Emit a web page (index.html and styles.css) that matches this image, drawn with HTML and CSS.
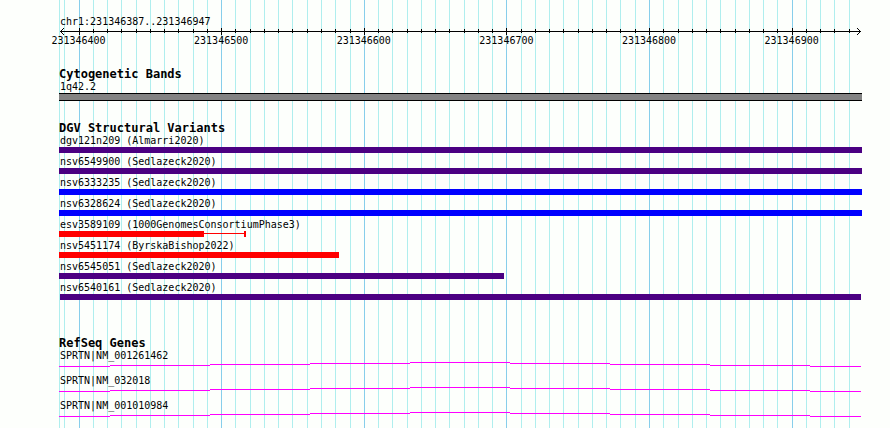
FILE: index.html
```
<!DOCTYPE html>
<html lang="en">
<head>
  <meta charset="UTF-8" />
  <meta name="viewport" content="width=device-width, initial-scale=1.0"/>
  <title>chr1:231346387..231346947</title>
  <link rel="stylesheet" href="styles.css">
</head>
<body>

  <main class="browser">
    <div class="grid" id="grid"></div>

    <header>
      <h1 class="label">chr1:231346387..231346947</h1>
      <div class="ruler" id="ruler">
        <svg class="arrow arrow-left" width="4" height="7" viewBox="0 0 4 7"><path d="M3 0h1v1h-1zM2 1h1v1h-1zM1 2h1v1h-1zM0 3h1v1h-1zM1 4h1v1h-1zM2 5h1v1h-1zM3 6h1v1h-1z"/></svg>
        <svg class="arrow arrow-right" width="4" height="7" viewBox="0 0 4 7"><path d="M0 0h1v1h-1zM1 1h1v1h-1zM2 2h1v1h-1zM3 3h1v1h-1zM2 4h1v1h-1zM1 5h1v1h-1zM0 6h1v1h-1z"/></svg>
      </div>
    </header>

    <section class="track">
      <h2>Cytogenetic Bands</h2>
      <div class="label">1q42.2</div>
      <div class="band"></div>
    </section>

    <section class="track variants">
      <h2>DGV Structural Variants</h2>
      <div class="label">dgv121n209 (Almarri2020)</div>
      <div class="bar indigo"></div>
      <div class="label">nsv6549900 (Sedlazeck2020)</div>
      <div class="bar indigo"></div>
      <div class="label">nsv6333235 (Sedlazeck2020)</div>
      <div class="bar blue"></div>
      <div class="label">nsv6328624 (Sedlazeck2020)</div>
      <div class="bar blue"></div>
      <div class="label">esv3589109 (1000GenomesConsortiumPhase3)</div>
      <div class="range">
        <div class="bar red" style="width: 18.06%"></div>
        <div class="whisker" style="width: 5.23%"></div>
      </div>
      <div class="label">nsv5451174 (ByrskaBishop2022)</div>
      <div class="bar red" style="width: 34.87%"></div>
      <div class="label">nsv6545051 (Sedlazeck2020)</div>
      <div class="bar indigo" style="width: 55.42%"></div>
      <div class="label">nsv6540161 (Sedlazeck2020)</div>
      <div class="bar indigo inset"></div>
    </section>

    <section class="track genes">
      <h2>RefSeq Genes</h2>
      <div class="label">SPRTN|NM_001261462</div>
      <svg class="intron" viewBox="0 0 802 5" preserveAspectRatio="none">
        <path id="intron" d="M0 4.5H51M51 3.5H151M151 2.5H251M251 1.5H351M351 0.5H451M451 1.5H551M551 2.5H651M651 3.5H751M751 4.5H802"/>
      </svg>
      <div class="label">SPRTN|NM_032018</div>
      <svg class="intron" viewBox="0 0 802 5" preserveAspectRatio="none"><use href="#intron"/></svg>
      <div class="label">SPRTN|NM_001010984</div>
      <svg class="intron" viewBox="0 0 802 5" preserveAspectRatio="none"><use href="#intron"/></svg>
    </section>
  </main>

  <script>
    // visible region in base pairs
    const start = 231346386.3;
    const span = 563.04;

    const grid = document.getElementById('grid');
    const ruler = document.getElementById('ruler');

    function addMark(parent, className, left, text) {
      const el = document.createElement('div');
      el.className = className;
      el.style.left = left + '%';
      if (text) el.textContent = text;
      parent.appendChild(el);
    }

    for (let pos = 231346390; pos <= 231346940; pos += 10) {
      const left = (pos - start) / span * 100;
      const major = pos % 100 === 0;
      addMark(grid, major ? 'line major' : 'line', left);
      if (pos > 231346390) addMark(ruler, major ? 'tick major' : 'tick', left);
      if (major) addMark(ruler, 'tick-label', left, String(pos));
    }
  </script>

</body>
</html>
```
FILE: styles.css
```
body {
  margin: 0;
  background: #fdfffc;
  color: #000;
  font-family: "DejaVu Sans Mono", monospace;
  font-size: 10px;
}

.browser {
  position: relative;
  box-sizing: border-box;
  min-height: 100vh;
  margin: 0 28px 0 59px;
  padding: 13px 0 6px;
}

/* vertical guide lines behind the tracks */
.grid {
  position: absolute;
  inset: 0;
  z-index: -1;
  box-shadow: inset 1px 0 #afeeee;
}

.line {
  position: absolute;
  top: 0;
  bottom: 0;
  width: 1px;
  background: #afeeee;
}

.line.major {
  background: #87ceeb;
}

.label {
  margin: 0;
  padding: 2px 0 0 1px;
  font-size: 10px;
  font-weight: normal;
  line-height: 13px;
  white-space: nowrap;
}

h2 {
  height: 10px;
  margin: 0;
  font-size: 12px;
  line-height: 12px;
  white-space: nowrap;
}

.ruler {
  position: relative;
  height: 20px;
}

.ruler::before {
  content: "";
  position: absolute;
  top: 3px;
  left: 1px;
  right: 1px;
  height: 1px;
  background: #000;
}

.arrow {
  position: absolute;
  top: 0;
}

.arrow-left {
  left: 1px;
}

.arrow-right {
  right: 1px;
}

.tick {
  position: absolute;
  top: 1px;
  width: 1px;
  height: 4px;
  background: #000;
}

.tick.major {
  top: 0;
  height: 7px;
}

.tick-label {
  position: absolute;
  top: 6px;
  line-height: 13px;
  transform: translateX(-50%);
}

.track {
  margin-top: 20px;
}

.band {
  height: 6px;
  background: #838383;
  border-top: 1px solid #000;
  border-bottom: 1px solid #000;
}

.variants {
  margin-top: 21px;
}

.bar {
  height: 6px;
}

.indigo {
  background: #4b0082;
}

.blue {
  background: #0000ff;
}

.red {
  background: #ff0000;
}

.inset {
  margin: 0 1px;
}

.range {
  display: flex;
  height: 6px;
}

.whisker {
  box-sizing: border-box;
  border-right: 2px solid #ff0000;
  background: linear-gradient(#ff0000, #ff0000) 0 2px / 100% 1px no-repeat;
}

.genes {
  margin-top: 37px;
}

.intron {
  display: block;
  width: calc(100% - 1px);
  height: 5px;
  margin-bottom: 5px;
  fill: none;
  stroke: #ff00ff;
  shape-rendering: crispEdges;
}
```
